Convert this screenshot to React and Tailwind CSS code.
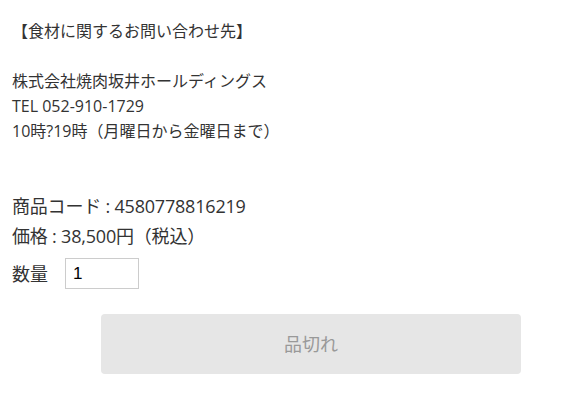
import React from 'react';

const font = { fontFamily: '"Open Sans", "Noto Sans CJK JP", sans-serif' };

export default function App() {
    return (
        <div className="min-h-[410px] w-[572px] bg-white text-[#333] px-3 pt-[19px]" style={font}>
            {/* お問い合わせ */}
            <div className="text-[16px] leading-[25px]">
                <p>【食材に関するお問い合わせ先】</p>
                <div className="mt-[25px]">
                    <p>株式会社焼肉坂井ホールディングス</p>
                    <p>TEL 052-910-1729</p>
                    <p>10時?19時（月曜日から金曜日まで）</p>
                </div>
            </div>

            {/* 商品情報 */}
            <div className="mt-[47px] text-[18px] leading-[30px]">
                <p className="tracking-[-0.2px]">商品コード : 4580778816219</p>
                <p className="tracking-[-0.2px]">価格 : 38,500円（税込）</p>
                <div className="flex items-center gap-[17px] mt-[7px]">
                    <span>数量</span>
                    <input
                        type="text"
                        defaultValue="1"
                        className="w-[74px] h-[31px] border border-[#ccc] px-[7px] text-[17px] text-black outline-none"
                        style={{ fontFamily: '"Liberation Sans", Arial, sans-serif' }}
                    />
                </div>
            </div>

            <div className="mt-[25px] ml-[89px]">
                <button
                    disabled
                    className="w-[420px] h-[60px] rounded-[4px] bg-[#e6e6e6] text-[#999] text-[18px]"
                >
                    品切れ
                </button>
            </div>
        </div>
    );
}
